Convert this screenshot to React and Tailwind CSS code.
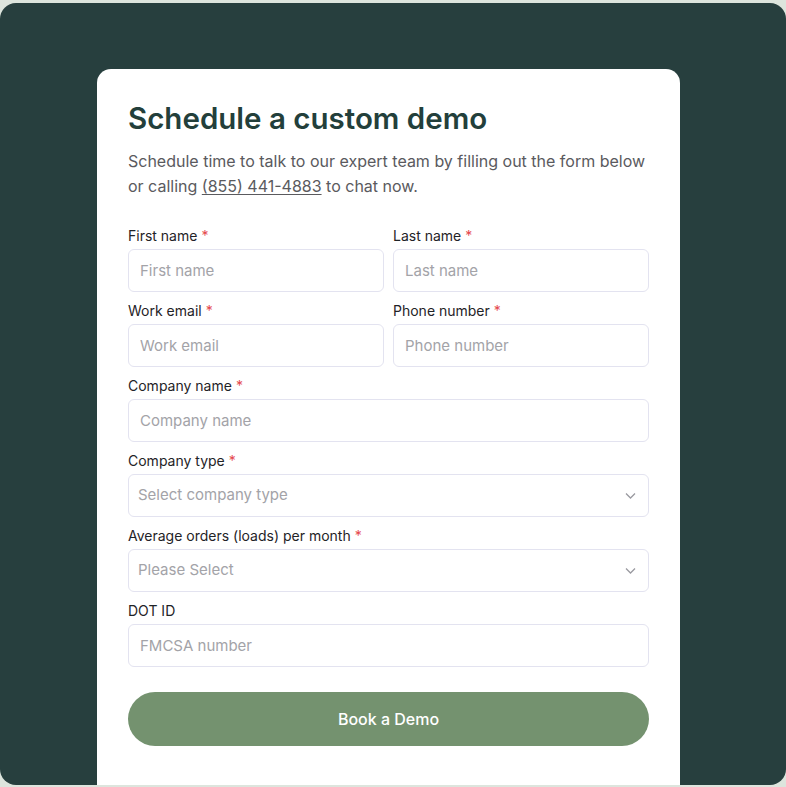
import React from "react";

const font = { fontFamily: "Inter, 'Noto Sans', sans-serif" };

const Label = ({ children, required = true }) => (
  <label className="block text-[14px] leading-[18px] text-[#1f2327] mb-[4px]">
    {children}
    {required && <span className="text-[#e5484d] ml-[4px]">*</span>}
  </label>
);

const Input = ({ placeholder }) => (
  <input
    placeholder={placeholder}
    className="w-full h-[43px] rounded-[6px] border border-[#e3e3f0] bg-white px-[11px] text-[15px] text-[#333] placeholder:text-[#a3a3a8] outline-none"
  />
);

const Select = ({ placeholder }) => (
  <div className="relative w-full h-[43px] rounded-[6px] border border-[#e3e3f0] bg-white flex items-center px-[9px]">
    <span className="text-[15px] text-[#a3a3a8]">{placeholder}</span>
    <svg
      className="absolute right-[12px] top-1/2 -translate-y-1/2"
      width="11"
      height="7"
      viewBox="0 0 11 7"
      fill="none"
    >
      <path d="M1 1l4.5 4.5L10 1" stroke="#9a9aa0" strokeWidth="1.3" />
    </svg>
  </div>
);

export default function App() {
  return (
    <div className="w-[786px] h-[787px] bg-[#dde5dd] pt-[3px]" style={font}>
      <div className="h-[782px] rounded-[16px] bg-[#273f3e] pt-[66px] pl-[97px] pr-[106px] flex flex-col overflow-hidden">
        <div className="flex-1 bg-white rounded-t-[14px] px-[31px] pt-[30px]">
          <h1 className="text-[29.5px] leading-[38px] font-semibold text-[#233f3b]">
            Schedule a custom demo
          </h1>
          <p className="mt-[12px] text-[16px] leading-[25px] text-[#5a5a5e]">
            Schedule time to talk to our expert team by filling out the form below or
            calling <span className="underline underline-offset-2">(855) 441-4883</span> to chat now.
          </p>

          <div className="mt-[28px] flex flex-col gap-[10px]">
            <div className="grid grid-cols-2 gap-[9px]">
              <div>
                <Label>First name</Label>
                <Input placeholder="First name" />
              </div>
              <div>
                <Label>Last name</Label>
                <Input placeholder="Last name" />
              </div>
            </div>
            <div className="grid grid-cols-2 gap-[9px]">
              <div>
                <Label>Work email</Label>
                <Input placeholder="Work email" />
              </div>
              <div>
                <Label>Phone number</Label>
                <Input placeholder="Phone number" />
              </div>
            </div>
            <div>
              <Label>Company name</Label>
              <Input placeholder="Company name" />
            </div>
            <div>
              <Label>Company type</Label>
              <Select placeholder="Select company type" />
            </div>
            <div>
              <Label>Average orders (loads) per month</Label>
              <Select placeholder="Please Select" />
            </div>
            <div>
              <Label required={false}>DOT ID</Label>
              <Input placeholder="FMCSA number" />
            </div>
          </div>

          <button className="mt-[25px] w-full h-[54px] rounded-full bg-[#74926f] text-white text-[16px] font-medium">
            Book a Demo
          </button>
        </div>
      </div>
    </div>
  );
}
